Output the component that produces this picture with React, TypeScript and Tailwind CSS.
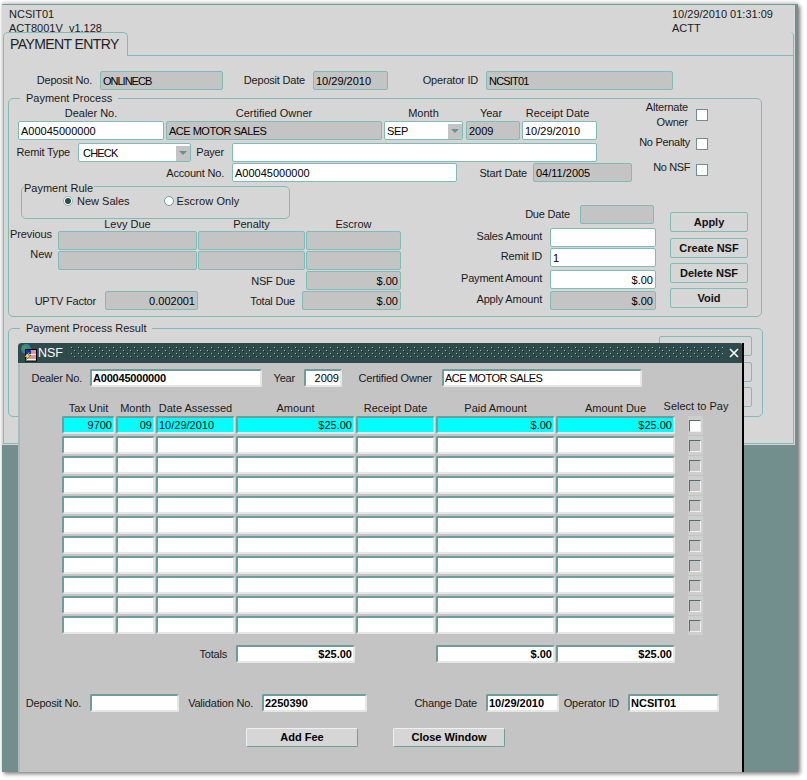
import React from 'react';

const font = { fontFamily: '"Liberation Sans", Arial, sans-serif' };

type BoxProps = { className?: string; children?: React.ReactNode };

// Plain caption, right aligned inside its box
const Label = ({ className = '', children }: BoxProps) => (
  <div className={`flex shrink-0 items-center justify-end text-[11px] leading-[14px] tracking-[-0.2px] whitespace-nowrap text-[#1a1a1a] ${className}`}>
    {children}
  </div>
);

// Caption that sits near the top of a field row (Previous, New)
const TopLabel = ({ children }: BoxProps) => (
  <div className="h-[19px] w-[43px] shrink-0 text-right text-[11px] leading-[6px] tracking-[-0.1px] whitespace-nowrap text-[#1a1a1a]">
    {children}
  </div>
);

// Column caption, centred over its field
const Head = ({ className = '', children }: BoxProps) => (
  <div className={`shrink-0 text-center text-[11px] leading-[14px] whitespace-nowrap text-[#1a1a1a] ${className}`}>
    {children}
  </div>
);

// Field on the main form: white when editable, grey when read only
const Field = ({ className = '', children, off }: BoxProps & { off?: boolean }) => (
  <div
    className={`flex h-[19px] shrink-0 items-center overflow-hidden rounded-[2px] border border-[#7fbcb8] px-[2px] pt-[1px] text-[11px] whitespace-nowrap text-black ${
      off ? 'bg-[#c4c4c4]' : 'bg-white'
    } ${className}`}
  >
    {children}
  </div>
);

// Sunken field in the NSF window
const Sunk = ({ className = '', children }: BoxProps) => (
  <div
    className={`flex h-[18px] shrink-0 items-center overflow-hidden rounded-[2px] border-2 border-t-[#6f9d9c] border-l-[#6f9d9c] border-r-[#e6e6e6] border-b-[#e6e6e6] px-[1px] text-[11px] whitespace-nowrap text-black ${className}`}
  >
    {children}
  </div>
);

const FormButton = ({ className = '', children }: BoxProps) => (
  <div className={`flex h-[20px] items-center justify-center rounded-[2px] border border-[#7fbcb8] text-[11px] font-bold text-[#111] ${className}`}>
    {children}
  </div>
);

const Check = ({ className = '' }: BoxProps) => (
  <div className={`h-[12px] w-[12px] shrink-0 border border-[#6f8f8e] bg-white ${className}`} />
);

const DropArrow = () => (
  <div className="ml-auto flex h-[15px] w-[14px] items-center justify-center bg-[#c4c4c4]">
    <div className="h-0 w-0 border-x-[4px] border-t-[4px] border-x-transparent border-t-[#6f8f8e]" />
  </div>
);

const Group = ({ title, className = '', children }: BoxProps & { title: string }) => (
  <div className={`relative rounded-[5px] border border-[#7fbcb8] ${className}`}>
    <div className="absolute top-[-8px] left-[11px] bg-[#d6d6d6] px-[6px] text-[11px] leading-[14px] text-[#1a1a1a]">{title}</div>
    {children}
  </div>
);

const NsfIcon = () => (
  <svg width="17" height="18" viewBox="0 0 17 18" className="shrink-0">
    <circle cx="6" cy="5" r="5" fill="#2f7fb0" />
    <path d="M2 2 L6 1 L8 4 L5 6 L2 5 Z" fill="#3f9a4f" />
    <rect x="5.5" y="5.5" width="11" height="11.5" fill="#fff" stroke="#000" />
    <rect x="6" y="6" width="5" height="4" fill="#1c2fa8" />
    <path d="M11 7h5M11 9h5M7 12h9M7 14h9" stroke="#d0202a" strokeWidth="1" />
    <path d="M9 8 L4 13 L7 13 L5 17 L11 11 L8 11 L10 8 Z" fill="#f4e02a" stroke="#222" strokeWidth="0.5" />
  </svg>
);

const TitleDots = () => (
  <svg width="652" height="12" className="ml-[7px] shrink-0">
    <defs>
      <pattern id="dots" width="7" height="6" patternUnits="userSpaceOnUse">
        <rect x="0" y="0" width="1" height="1" fill="#8fc0bc" />
        <rect x="1" y="1" width="1" height="1" fill="#15282a" />
        <rect x="3" y="3" width="1" height="1" fill="#8fc0bc" />
        <rect x="4" y="4" width="1" height="1" fill="#15282a" />
      </pattern>
    </defs>
    <rect width="652" height="12" fill="url(#dots)" />
  </svg>
);

const GridRow = ({ cells, bg, checked }: { cells?: string[]; bg: string; checked?: boolean }) => {
  const c = cells ?? ['', '', '', '', '', '', ''];
  return (
    <div className="flex h-[20px] items-start">
      <Sunk className={`w-[53px] justify-end pr-[1px] ${bg}`}>{c[0]}</Sunk>
      <Sunk className={`ml-[1px] w-[39px] justify-end ${bg}`}>{c[1]}</Sunk>
      <Sunk className={`ml-[1px] w-[79px] ${bg}`}>{c[2]}</Sunk>
      <Sunk className={`ml-[1px] w-[119px] justify-end ${bg}`}>{c[3]}</Sunk>
      <Sunk className={`ml-[1px] w-[79px] ${bg}`}>{c[4]}</Sunk>
      <Sunk className={`ml-[1px] w-[119px] justify-end ${bg}`}>{c[5]}</Sunk>
      <Sunk className={`ml-[1px] w-[119px] justify-end ${bg}`}>{c[6]}</Sunk>
      <div className="ml-[13px] flex h-[19px] w-[15px] items-center bg-[#cfcfcf] pl-[1px]">
        <div className={`h-[12px] w-[12px] border border-t-[#4f6f6e] border-l-[#4f6f6e] border-r-[#f0f0f0] border-b-[#f0f0f0] ${checked ? 'bg-white' : 'bg-[#c4c4c4]'}`} />
      </div>
    </div>
  );
};

const PaymentProcess = () => (
  <Group title="Payment Process" className="ml-[4px] h-[219px] w-[754px]">
    {/* upper part: dealer rows and the three checkboxes */}
    <div className="flex h-[83px]">
      <div className="w-[626px]">
        <div className="ml-[9px] flex h-[22px] items-end gap-[2px] pb-[1px]">
          <Head className="w-[146px]">Dealer No.</Head>
          <Head className="w-[216px]">Certified Owner</Head>
          <Head className="w-[79px]">Month</Head>
          <Head className="ml-[1px] w-[50px]">Year</Head>
          <Head className="w-[79px]">Receipt Date</Head>
        </div>
        <div className="ml-[9px] flex gap-[2px]">
          <Field className="w-[146px]">A00045000000</Field>
          <Field off className="w-[216px] tracking-[-0.5px]">ACE MOTOR SALES</Field>
          <Field className="w-[79px] pr-0 tracking-[-0.3px]">SEP<DropArrow /></Field>
          <Field off className="ml-[1px] w-[54px]">2009</Field>
          <Field className="w-[75px]">10/29/2010</Field>
        </div>
        <div className="mt-[3px] flex">
          <Label className="w-[61px] pb-[2px]">Remit Type</Label>
          <Field className="ml-[8px] w-[113px] pr-0 pl-[4px] tracking-[-0.8px]">CHECK<DropArrow /></Field>
          <Label className="w-[33px] pb-[2px]">Payer</Label>
          <Field className="ml-[8px] w-[365px]" />
        </div>
        <div className="mt-[1px] flex">
          <Label className="w-[215px]">Account No.</Label>
          <Field className="ml-[8px] w-[225px]">A00045000000</Field>
          <Label className="w-[70px]">Start Date</Label>
          <Field off className="ml-[6px] w-[99px]">04/11/2005</Field>
        </div>
      </div>
      <div className="pt-[1px]">
        <div className="flex h-[30px] items-center">
          <Label className="w-[53px] text-right leading-[15px]">Alternate<br />Owner</Label>
          <Check className="ml-[8px]" />
        </div>
        <div className="mt-[5px] flex h-[15px] items-start">
          <Label className="w-[55px] tracking-[-0.3px]">No Penalty</Label>
          <Check className="mt-[3px] ml-[6px]" />
        </div>
        <div className="mt-[10px] flex h-[15px] items-start">
          <Label className="w-[55px] tracking-[-0.4px]">No NSF</Label>
          <Check className="mt-[4px] ml-[6px]" />
        </div>
      </div>
    </div>

    {/* lower part: rule and dues, amounts, buttons */}
    <div className="flex">
      <div className="w-[392px]">
        <div className="relative mt-[4px] ml-[12px] h-[33px] w-[269px] rounded-[5px] border border-[#7fbcb8]">
          <div className="absolute top-[-6px] left-[2px] bg-[#d6d6d6] pr-[1px] text-[11px] leading-[14px] text-[#1a1a1a]">Payment Rule</div>
          <div className="flex items-center pt-[7px] pl-[41px] text-[11px] leading-[14px] text-[#1a1a1a]">
            <div className="flex h-[10px] w-[10px] items-center justify-center rounded-full border border-[#7fbcb8] bg-white">
              <div className="h-[6px] w-[6px] rounded-full bg-[#2f4a4a]" />
            </div>
            <span className="ml-[4px]">New Sales</span>
            <div className="ml-[34px] h-[10px] w-[10px] rounded-full border border-[#6f9d9c] bg-white" />
            <span className="ml-[3px] tracking-[0.1px]">Escrow Only</span>
          </div>
        </div>
        <div className="-mt-[2px] ml-[49px] flex h-[14px] gap-[1px]">
          <Head className="w-[139px]">Levy Due</Head>
          <Head className="w-[107px]">Penalty</Head>
          <Head className="w-[95px]">Escrow</Head>
        </div>
        <div className="flex gap-[1px]">
          <TopLabel>Previous</TopLabel>
          <Field off className="ml-[5px] w-[139px]" />
          <Field off className="w-[107px]" />
          <Field off className="w-[95px]" />
        </div>
        <div className="mt-[1px] flex gap-[1px]">
          <TopLabel>New</TopLabel>
          <Field off className="ml-[5px] w-[139px]" />
          <Field off className="w-[107px]" />
          <Field off className="w-[95px]" />
        </div>
        <div className="mt-[1px] flex">
          <Label className="w-[286px]">NSF Due</Label>
          <Field off className="ml-[11px] w-[95px] justify-end">$.00</Field>
        </div>
        <div className="mt-[1px] flex">
          <Label className="w-[87px]">UPTV Factor</Label>
          <Field off className="ml-[9px] w-[93px] justify-end">0.002001</Field>
          <Label className="w-[97px]">Total Due</Label>
          <Field off className="ml-[7px] w-[99px] justify-end">$.00</Field>
        </div>
      </div>

      <div className="w-[255px] pt-[23px]">
        <div className="flex">
          <Label className="w-[169px] pb-[2px]">Due Date</Label>
          <Field off className="ml-[10px] h-[18px] w-[74px]" />
        </div>
        <div className="mt-[4px] flex">
          <Label className="w-[141px] pb-[4px]">Sales Amount</Label>
          <Field className="ml-[8px] w-[106px]" />
        </div>
        <div className="mt-[1px] flex">
          <Label className="w-[141px] pb-[4px]">Remit ID</Label>
          <Field className="ml-[8px] w-[106px]">1</Field>
        </div>
        <div className="mt-[3px] flex">
          <Label className="w-[141px] pb-[4px]">Payment Amount</Label>
          <Field className="ml-[8px] w-[106px] justify-end">$.00</Field>
        </div>
        <div className="mt-[2px] flex">
          <Label className="w-[141px] pb-[4px]">Apply Amount</Label>
          <Field off className="ml-[8px] w-[106px] justify-end">$.00</Field>
        </div>
      </div>

      <div className="ml-[14px] pt-[30px]">
        <FormButton className="w-[78px]">Apply</FormButton>
        <FormButton className="mt-[6px] w-[78px]">Create NSF</FormButton>
        <FormButton className="mt-[5px] w-[78px]">Delete NSF</FormButton>
        <FormButton className="mt-[5px] w-[78px]">Void</FormButton>
      </div>
    </div>
  </Group>
);

const NsfWindow = () => {
  const empty = Array.from({ length: 10 }, (_, i) => i);
  return (
    <div className="absolute top-[343px] left-[18px] h-[429px] w-[726px] border-r-2 border-black bg-[#c4c4c4]">
      <div className="flex h-[20px] items-center rounded-tl-[4px] rounded-tr-[2px] bg-[#2f4a4a] pl-[2px]">
        <NsfIcon />
        <span className="ml-[1px] w-[26px] text-[12.5px] leading-[20px] text-white">NSF</span>
        <TitleDots />
        <svg width="10" height="10" viewBox="0 0 10 10" className="ml-[6px] shrink-0">
          <path d="M1 1 L9 9 M9 1 L1 9" stroke="#fff" strokeWidth="1.6" />
        </svg>
      </div>

      <div className="h-[409px] border-l-2 border-[#a9bcbb]">
        <div className="flex pt-[6px]">
          <Label className="h-[18px] w-[62px]">Dealer No.</Label>
          <Sunk className="ml-[8px] w-[172px] bg-white font-bold tracking-[-0.2px]">A00045000000</Sunk>
          <Label className="h-[18px] w-[33px]">Year</Label>
          <Sunk className="ml-[9px] w-[38px] justify-end bg-white">2009</Sunk>
          <Label className="h-[18px] w-[90px]">Certified Owner</Label>
          <Sunk className="ml-[10px] w-[200px] bg-white tracking-[-0.5px]">ACE MOTOR SALES</Sunk>
        </div>

        <div className="mt-[14px] ml-[42px]">
          <div className="flex h-[15px] text-center">
            <Head className="w-[53px]">Tax Unit</Head>
            <Head className="ml-[1px] w-[39px]">Month</Head>
            <Head className="ml-[1px] w-[79px]">Date Assessed</Head>
            <Head className="ml-[1px] w-[119px]">Amount</Head>
            <Head className="ml-[1px] w-[79px]">Receipt Date</Head>
            <Head className="ml-[1px] w-[119px]">Paid Amount</Head>
            <Head className="ml-[1px] w-[119px]">Amount Due</Head>
            <Head className="-mt-[2px] -ml-[13px] w-[68px]">Select to Pay</Head>
          </div>
          <GridRow bg="bg-[#00ffff]" checked cells={['9700', '09', '10/29/2010', '$25.00', '', '$.00', '$25.00']} />
          {empty.map((i) => (
            <GridRow key={i} bg="bg-white" />
          ))}
        </div>

        <div className="mt-[9px] flex">
          <Label className="h-[18px] w-[207px]">Totals</Label>
          <Sunk className="ml-[9px] w-[119px] justify-end bg-white font-bold">$25.00</Sunk>
          <Sunk className="ml-[81px] w-[119px] justify-end bg-white font-bold">$.00</Sunk>
          <Sunk className="ml-[1px] w-[119px] justify-end bg-white font-bold">$25.00</Sunk>
        </div>

        <div className="mt-[31px] flex">
          <Label className="h-[18px] w-[61px]">Deposit No.</Label>
          <Sunk className="ml-[9px] w-[89px] bg-white" />
          <Label className="h-[18px] w-[74px]">Validation No.</Label>
          <Sunk className="ml-[9px] w-[105px] bg-white font-bold">2250390</Sunk>
          <Label className="h-[18px] w-[110px]">Change Date</Label>
          <Sunk className="ml-[9px] w-[73px] bg-white font-bold">10/29/2010</Sunk>
          <Label className="h-[18px] w-[60px]">Operator ID</Label>
          <Sunk className="ml-[9px] w-[91px] bg-white font-bold">NCSIT01</Sunk>
        </div>

        <div className="mt-[16px] ml-[226px] flex gap-[35px]">
          <div className="flex h-[19px] w-[112px] items-center justify-center rounded-[2px] border border-t-[#f0f0f0] border-l-[#f0f0f0] border-r-[#6f9d9c] border-b-[#6f9d9c] bg-[#d6d6d6] text-[11px] font-bold text-black">Add Fee</div>
          <div className="flex h-[19px] w-[112px] items-center justify-center rounded-[2px] border border-t-[#f0f0f0] border-l-[#f0f0f0] border-r-[#6f9d9c] border-b-[#6f9d9c] bg-[#d6d6d6] text-[11px] font-bold text-black">Close Window</div>
        </div>
      </div>
    </div>
  );
};

export default function App() {
  return (
    <div style={font} className="relative h-[780px] w-[807px] overflow-hidden bg-white pt-[4px] pl-[2px]">
      <div className="h-[768px] w-[796px] border-t border-[#6f9d9c] bg-[#728f8e] shadow-[2px_2px_4px_rgba(0,0,0,0.5),0_-2px_3px_rgba(0,0,0,0.15)]">
        <div className="h-[440px] w-[793px] bg-[#d6d6d6]">
          {/* user and date header */}
          <div className="flex h-[27px] justify-between pt-[2px] pl-[7px] text-[11px] leading-[14px] text-[#1a1a1a]">
            <div>NCSIT01<br />ACT8001V&nbsp; v1.128</div>
            <div className="w-[123px]">10/29/2010 01:31:09<br />ACTT</div>
          </div>

          {/* tab strip */}
          <div className="relative flex h-[24px]">
            <div className="ml-[1px] flex w-[125px] items-center rounded-t-[5px] border-x border-t border-[#7fbcb8] bg-[#d6d6d6] pl-[6px] text-[14px] tracking-[-0.6px] text-[#222]">
              PAYMENT ENTRY
            </div>
            <div className="mr-[1px] flex-1 rounded-tr-[4px] border-r border-b border-[#7fbcb8]" />
          </div>

          {/* tab page */}
          <div className="ml-[1px] h-[388px] w-[791px] border-x border-b border-[#7fbcb8]">
            <div className="flex pt-[15px]">
              <Label className="w-[88px] pb-[2px]">Deposit No.</Label>
              <Field off className="ml-[8px] w-[123px] tracking-[-1px]">ONLINECB</Field>
              <Label className="w-[82px] pb-[2px]">Deposit Date</Label>
              <Field off className="ml-[8px] w-[75px]">10/29/2010</Field>
              <Label className="w-[90px] pb-[2px]">Operator ID</Label>
              <Field off className="ml-[8px] w-[187px] tracking-[-0.8px]">NCSIT01</Field>
            </div>
            <div className="mt-[8px]">
              <PaymentProcess />
            </div>
            <Group title="Payment Process Result" className="mt-[11px] ml-[4px] h-[89px] w-[755px]">
              <div className="ml-[650px] flex flex-col pt-[7px]">
                <FormButton className="w-[93px]" />
                <FormButton className="mt-[6px] w-[93px]" />
                <FormButton className="mt-[5px] w-[93px]" />
              </div>
            </Group>
          </div>
        </div>
      </div>
      <NsfWindow />
    </div>
  );
}
